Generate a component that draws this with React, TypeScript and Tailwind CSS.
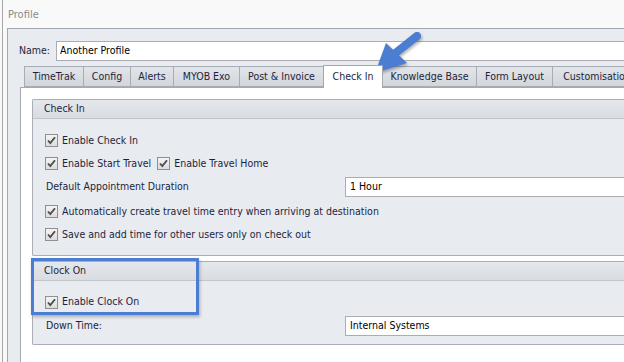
import React from "react";

const font = { fontFamily: '"DejaVu Sans Condensed", "Liberation Sans", Arial, sans-serif' };

function Check() {
  return (
    <span className="flex h-[13px] w-[13px] shrink-0 items-center justify-center border border-[#8e8f8f] bg-gradient-to-b from-[#f4f4f4] to-[#dcdcdc]">
      <svg width="9" height="9" viewBox="0 0 9 9">
        <path d="M1 4.5 L3.3 7 L8 1.2" fill="none" stroke="#4a4a4a" strokeWidth="1.8" />
      </svg>
    </span>
  );
}

function CheckRow({ label }: { label: string }) {
  return (
    <div className="flex items-center gap-[4px]">
      <Check />
      <span>{label}</span>
    </div>
  );
}

function Panel({ title, children }: { title: string; children: React.ReactNode }) {
  return (
    <div className="rounded-l-[2px] border border-r-0 border-[#a9aeb6] bg-[#e8ebef]">
      <div className="flex h-[19px] items-center border-b border-[#c1c5cc] bg-gradient-to-b from-[#e4e7eb] to-[#d9dde2] pl-[11px]">
        {title}
      </div>
      {children}
    </div>
  );
}

const tabs = [
  { label: "TimeTrak", w: "w-[59px] border-l" },
  { label: "Config", w: "w-[47px] border-l" },
  { label: "Alerts", w: "w-[43px] border-l" },
  { label: "MYOB Exo", w: "w-[66px] border-l" },
  { label: "Post & Invoice", w: "w-[84px] border-l" },
  { label: "Check In", w: "w-[60px]", active: true },
  { label: "Knowledge Base", w: "w-[93px]" },
  { label: "Form Layout", w: "w-[76px] border-l" },
  { label: "Customisation", w: "w-[90px] border-l border-r" },
];

export default function App() {
  return (
    <div className="relative flex h-[362px] w-[624px] overflow-hidden bg-[#f9f9f9] text-[10.5px] text-[#1e1f3e]" style={font}>
      <div className="w-[2px] shrink-0" />
      <div className="w-px shrink-0 bg-[#a6a6a6]" />
      <div className="flex flex-1 flex-col pl-[4px]">
        <div className="flex h-[28px] items-center pl-px pt-[3px] text-[11px] text-[#8a8a8a]">Profile</div>
        <div className="flex flex-1 flex-col border-l border-t border-[#a3a8b0] bg-[#e8ebef]">
          <div className="flex items-center pl-[11px] pt-[12px]">
            <span className="w-[37px]">Name:</span>
            <div className="flex h-[20px] flex-1 items-center border border-r-0 border-[#abadb3] bg-white pl-[3px] text-black">
              Another Profile
            </div>
          </div>
          <div className="flex flex-1 flex-col pl-[12px] pt-[4px]">
            <div className="flex h-[22px] items-end pl-[4px]">
              {tabs.map((t) =>
                t.active ? (
                  <div
                    key={t.label}
                    className={`relative z-10 -mb-px flex h-[23px] ${t.w} shrink-0 items-center justify-center border border-b-0 border-[#a3a8b0] bg-white`}
                  >
                    {t.label}
                  </div>
                ) : (
                  <div
                    key={t.label}
                    className={`flex h-[21px] ${t.w} shrink-0 items-center justify-center border-y border-[#a8adb5] bg-gradient-to-b from-[#e2e5e9] to-[#d2d6db]`}
                  >
                    {t.label}
                  </div>
                )
              )}
            </div>
            <div className="flex flex-1 flex-col gap-[5px] border-l border-t border-[#a3a8b0] bg-white pl-[11px] pt-[11px]">
              <Panel title="Check In">
                <div className="flex flex-col pb-[10px] pl-[12px] pt-[10px]">
                  <div className="flex h-[23px] items-center">
                    <CheckRow label="Enable Check In" />
                  </div>
                  <div className="flex h-[23px] items-center gap-[6px]">
                    <CheckRow label="Enable Start Travel" />
                    <CheckRow label="Enable Travel Home" />
                  </div>
                  <div className="flex h-[24px] items-center">
                    <span className="w-[300px] pl-px">Default Appointment Duration</span>
                    <div className="flex h-[20px] flex-1 items-center border border-r-0 border-[#abadb3] bg-white pl-[4px] text-black">
                      1 Hour
                    </div>
                  </div>
                  <div className="flex h-[25px] items-center">
                    <CheckRow label="Automatically create travel time entry when arriving at destination" />
                  </div>
                  <div className="flex h-[21px] items-center">
                    <CheckRow label="Save and add time for other users only on check out" />
                  </div>
                </div>
              </Panel>
              <Panel title="Clock On">
                <div className="flex flex-col pb-[6px] pl-[12px] pt-[9px]">
                  <div className="flex h-[24px] items-center">
                    <CheckRow label="Enable Clock On" />
                  </div>
                  <div className="flex h-[24px] items-center">
                    <span className="w-[300px] pl-px">Down Time:</span>
                    <div className="flex h-[20px] flex-1 items-center border border-r-0 border-[#abadb3] bg-white pl-[4px] text-black">
                      Internal Systems
                    </div>
                  </div>
                </div>
              </Panel>
            </div>
          </div>
        </div>
      </div>

      {/* annotation: highlight box */}
      <div className="absolute left-[31px] top-[258px] h-[57px] w-[168px] border-[3px] border-[#4b7dd2] shadow-[1px_2px_3px_rgba(0,0,0,0.25)]" />
      {/* annotation: arrow */}
      <svg className="absolute left-0 top-0" width="624" height="362" viewBox="0 0 624 362">
        <g style={{ filter: "drop-shadow(1px 2px 1.5px rgba(0,0,0,0.3))" }}>
          <line x1="417" y1="36" x2="393" y2="55" stroke="#4b7dd2" strokeWidth="8" strokeLinecap="round" />
          <polygon points="375,73 386,43 407,63" fill="#4b7dd2" />
        </g>
      </svg>
    </div>
  );
}
